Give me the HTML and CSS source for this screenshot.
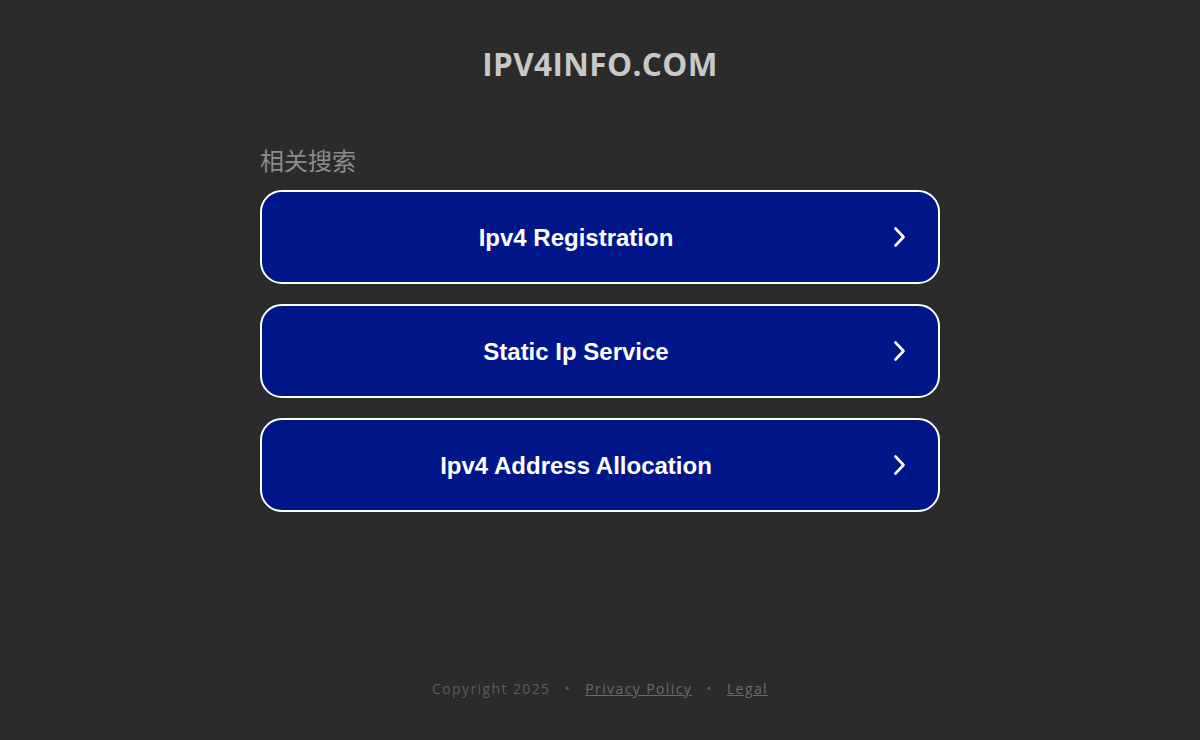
FILE: index.html
```html
<!DOCTYPE html>
<html lang="zh">
<head>
<meta charset="utf-8">
<title>ipv4info.com</title>
<link rel="stylesheet" href="styles.css">
</head>
<body>
<div class="page">
  <header class="header">
    <h1 class="domain">IPV4INFO.COM</h1>
  </header>
  <main class="main">
    <h2 class="related">相关搜索</h2>
    <div class="links">
      <a class="link" href="#"><span class="link-text">Ipv4 Registration</span><svg class="chev" width="16" height="24" viewBox="0 0 16 24"><path d="M5.5 3.5 L13.5 12 L5.5 20.5" fill="none" stroke="#fff" stroke-width="2.6" stroke-linecap="round" stroke-linejoin="round"/></svg></a>
      <a class="link" href="#"><span class="link-text">Static Ip Service</span><svg class="chev" width="16" height="24" viewBox="0 0 16 24"><path d="M5.5 3.5 L13.5 12 L5.5 20.5" fill="none" stroke="#fff" stroke-width="2.6" stroke-linecap="round" stroke-linejoin="round"/></svg></a>
      <a class="link" href="#"><span class="link-text">Ipv4 Address Allocation</span><svg class="chev" width="16" height="24" viewBox="0 0 16 24"><path d="M5.5 3.5 L13.5 12 L5.5 20.5" fill="none" stroke="#fff" stroke-width="2.6" stroke-linecap="round" stroke-linejoin="round"/></svg></a>
    </div>
  </main>
  <footer class="footer">
    <span>Copyright 2025</span>
    <span class="dot">•</span>
    <a href="#" class="flink">Privacy Policy</a>
    <span class="dot">•</span>
    <a href="#" class="flink">Legal</a>
  </footer>
</div>
</body>
</html>
```

FILE: styles.css
```css
html, body {
  margin: 0;
  padding: 0;
  background: #2b2b2b;
  height: 100%;
}
.page {
  height: 740px;
  display: flex;
  flex-direction: column;
  align-items: center;
}
.header {
  padding-top: 44px;
}
.domain {
  margin: 0;
  font-family: "Open Sans", "Liberation Sans", sans-serif;
  font-weight: 700;
  font-size: 31.5px;
  line-height: 40px;
  color: #c8c8c8;
  letter-spacing: 0.4px;
}
.main {
  width: 680px;
  margin-top: 62px;
}
.related {
  margin: 0 0 16px 0;
  font-family: "Noto Sans CJK SC", "Noto Sans", sans-serif;
  font-weight: 400;
  font-size: 24px;
  line-height: 28px;
  color: #8c8c8c;
}
.links {
  display: flex;
  flex-direction: column;
  gap: 20px;
}
.link {
  display: flex;
  align-items: center;
  height: 90px;
  border: 2px solid #ffffff;
  border-radius: 22px;
  background: #011689;
  text-decoration: none;
  padding-right: 32px;
}
.link-text {
  flex: 1;
  text-align: center;
  padding-top: 2px;
  font-family: "Liberation Sans", Arial, sans-serif;
  font-weight: 700;
  font-size: 24px;
  color: #ffffff;
}
.chev {
  display: block;
}
.footer {
  margin-top: auto;
  margin-bottom: 42px;
  font-family: "Open Sans", "Liberation Sans", sans-serif;
  font-size: 14px;
  letter-spacing: 1.4px;
  color: #5c5c5c;
  display: flex;
  gap: 14px;
  align-items: center;
}
.flink {
  color: #6a6a6a;
  text-decoration: underline;
}
.dot {
  color: #5c5c5c;
}
```
